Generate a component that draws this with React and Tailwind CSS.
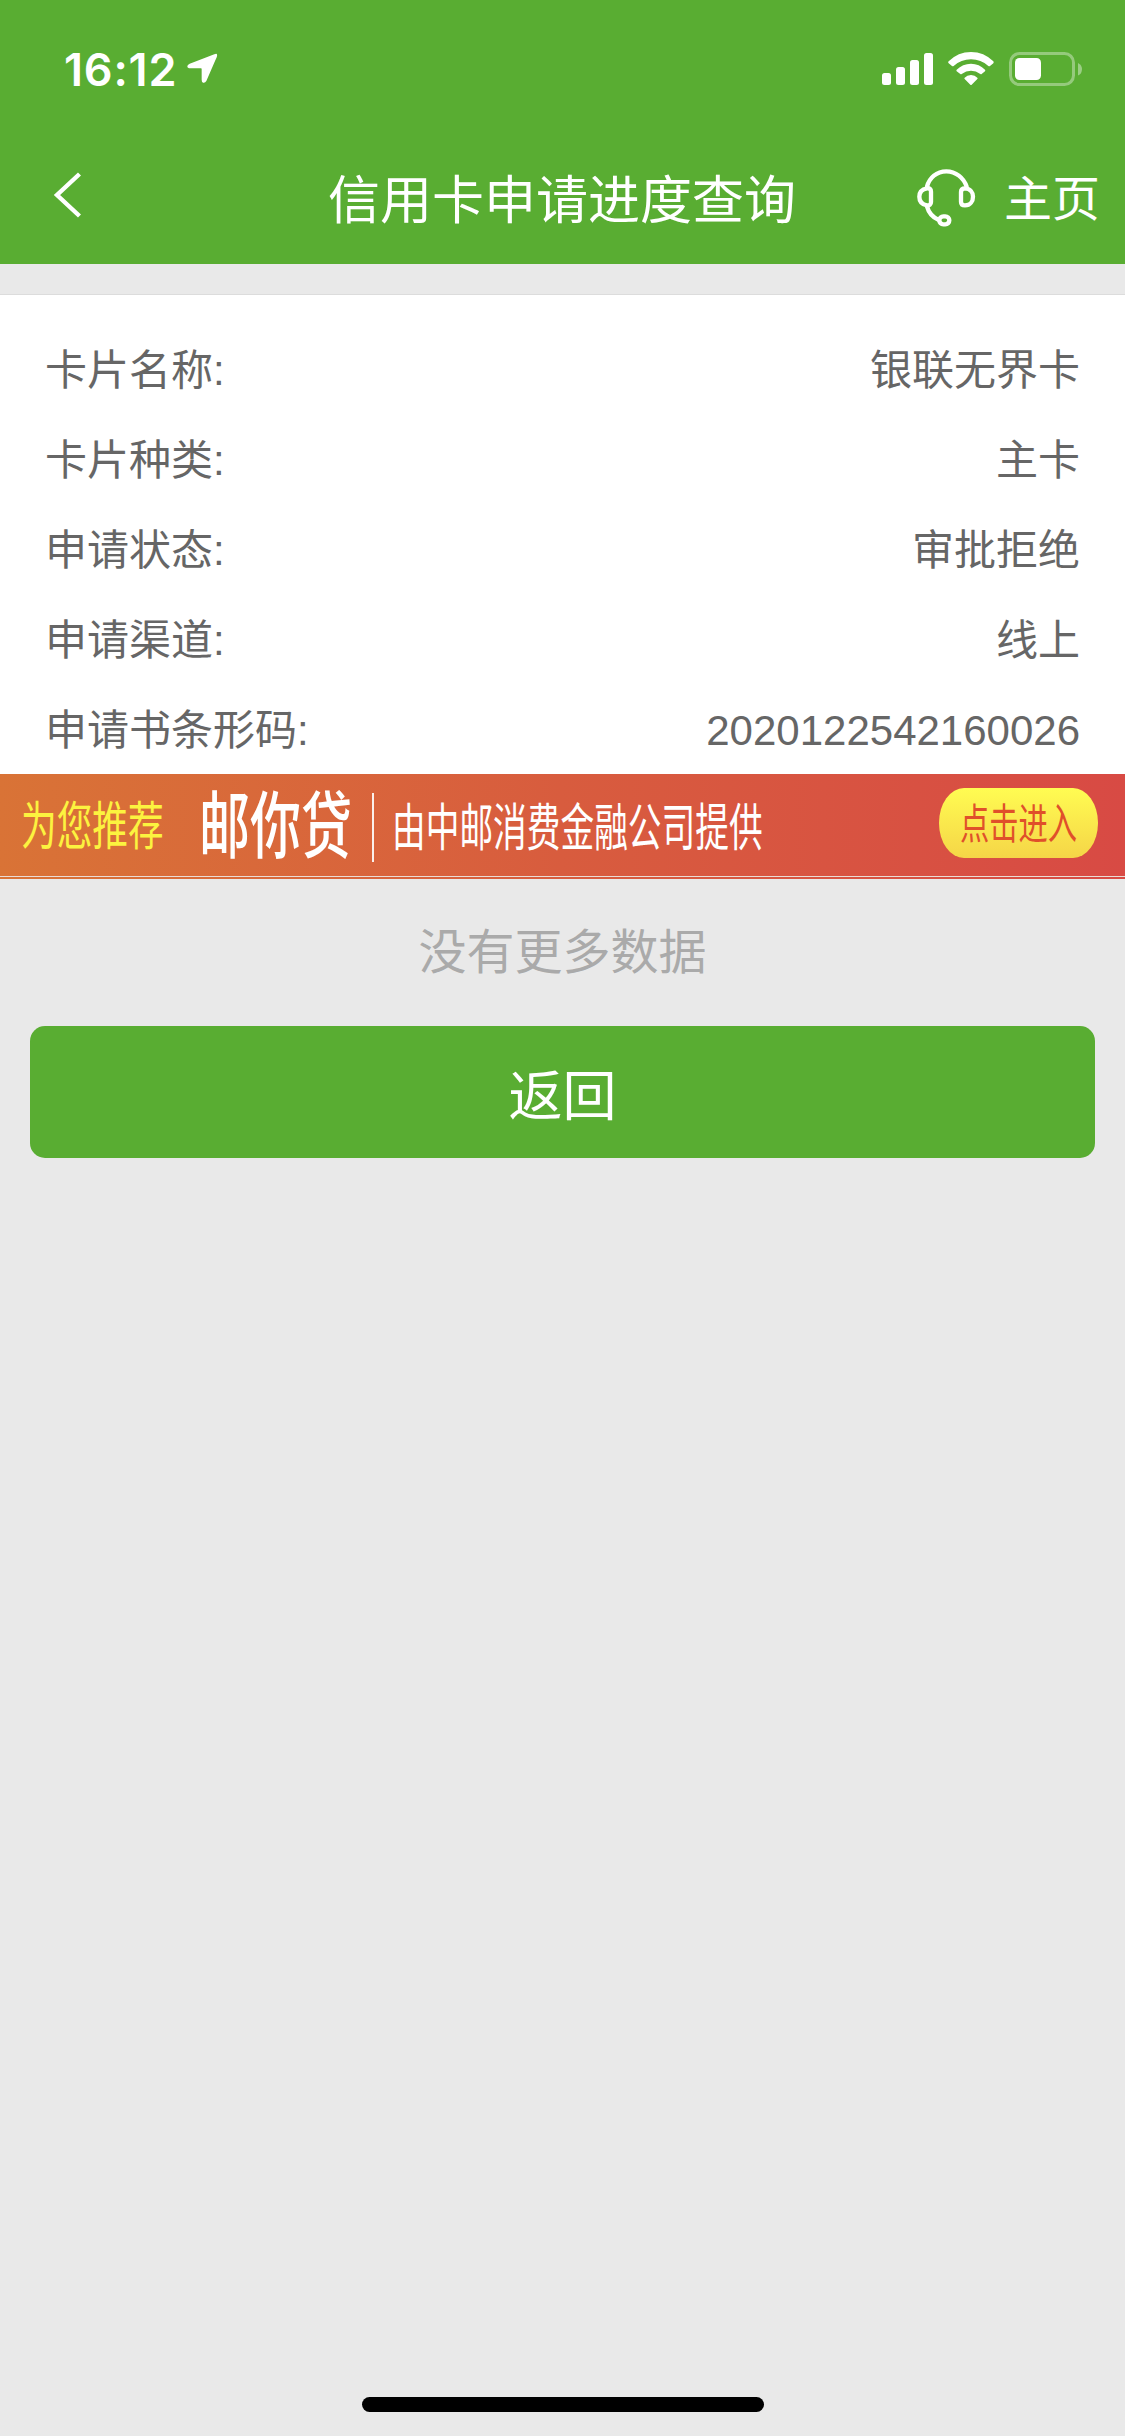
import React from "react";

const details = [
  { label: "卡片名称", value: "银联无界卡" },
  { label: "卡片种类", value: "主卡" },
  { label: "申请状态", value: "审批拒绝" },
  { label: "申请渠道", value: "线上" },
  { label: "申请书条形码", value: "2020122542160026" },
];

function StatusBar() {
  return (
    <div className="flex h-[132px] items-start justify-between pl-[64px] pr-[43px] pt-[51px]">
      <div className="flex items-start">
        <span className="w-[123px] font-['Inter'] text-[45px] font-semibold leading-[37px] tracking-[0.8px]">
          16:12
        </span>
        <svg className="mt-[2px] h-[32px] w-[32px]" viewBox="0 0 96 96" fill="currentColor">
          <path d="M82 4 Q92 -1 90 10 Q89 14 85 22 L58 84 Q54 91 48 89 Q44 87 44 80 V48 Q44 46 42 46 H10 Q1 46 1 40 Q1 35 8 32 Z" />
        </svg>
      </div>
      <div className="flex items-start gap-[15px]">
        <svg className="h-[36px] w-[51px]" viewBox="0 0 51 36" fill="currentColor">
          <rect x="0" y="22" width="9" height="12" rx="2.5" />
          <rect x="14" y="16" width="9" height="18" rx="2.5" />
          <rect x="28" y="9" width="9" height="25" rx="2.5" />
          <rect x="42" y="2" width="9" height="32" rx="2.5" />
        </svg>
        <svg className="h-[36px] w-[46px]" viewBox="0 0 138 108" fill="currentColor">
          <path d="M2 37 Q-1 34 2 31 Q30 3 69 3 Q108 3 136 31 Q138 34 136 37 L126 45 Q124 47 121 45 Q99 25 69 25 Q39 25 17 45 Q14 47 12 45 Z" />
          <path d="M26 61 Q24 58 26 56 Q44 38 69 38 Q94 38 111 56 Q113 58 111 61 L101 69 Q99 71 97 69 Q84 59 69 59 Q54 59 41 69 Q39 71 37 69 Z" />
          <path d="M50 84 Q48 82 50 80 Q57 72 69 72 Q81 72 88 80 Q90 82 88 84 L71 101 Q69 103 67 101 Z" />
        </svg>
        <svg className="h-[36px] w-[73px]" viewBox="0 0 73 36" fill="none">
          <rect x="1.5" y="2.5" width="63" height="31" rx="9" stroke="currentColor" strokeOpacity="0.36" strokeWidth="3" />
          <rect x="6" y="7" width="26" height="22" rx="4.5" fill="currentColor" />
          <path d="M69 12 Q73 14 73 18 Q73 23 69 24.500 Z" fill="currentColor" fillOpacity="0.4" />
        </svg>
      </div>
    </div>
  );
}

function Headset() {
  return (
    <svg
      className="h-[64px] w-[64px]"
      viewBox="0 0 192 192"
      fill="none"
      stroke="currentColor"
      strokeWidth="13"
      strokeLinecap="round"
    >
      <path d="M36 62 C43 35 65 16 94 16 C122 16 146 35 155 62" />
      <path d="M36 67 C20 70 13 80 13 92 C13 104 20 115 36 118 C44 119 48 115 48 108 V77 C48 70 44 66 36 67 Z" />
      <path d="M150 67 C166 68 174 80 174 92 C174 105 166 118 150 118 C142 118 138 114 138 107 V78 C138 71 142 67 150 67 Z" />
      <path d="M36 121 C41 140 54 154 70 161" />
      <rect x="73" y="151" width="30" height="24" rx="12" />
    </svg>
  );
}

function Header() {
  return (
    <header className="h-[264px] bg-[#59ad32] text-white">
      <StatusBar />
      <div className="grid h-[132px] grid-cols-[1fr_auto_1fr] items-center pl-[53px] pr-[25px]">
        <button className="mb-[7px] justify-self-start">
          <svg className="h-[48px] w-[30px]" viewBox="0 0 30 48" fill="none" stroke="currentColor" strokeWidth="4.4">
            <path d="M26.500 3 L4 24 L26.500 45" />
          </svg>
        </button>
        <h1 className="-ml-[29px] pt-[5px] text-[52px] leading-[60px]">信用卡申请进度查询</h1>
        <div className="flex items-center gap-[25px] justify-self-end">
          <Headset />
          <span className="pt-[4px] text-[48px] leading-[56px]">主页</span>
        </div>
      </div>
    </header>
  );
}

// The promo lettering is tall and narrow, so it is stretched vertically.
function Banner() {
  return (
    <div className="bg-linear-to-r from-[#d97336] via-[#d85c3e] to-[#d84a44] pb-[2px]">
      <div className="flex h-[102px] items-center whitespace-nowrap pl-[21px] pr-[27px]">
        <span className="w-[178px] pt-[3px] scale-y-[1.46] text-[35.7px] leading-[40px] text-[#fcf33f]">为您推荐</span>
        <span className="w-[173px] pt-[4px] scale-y-[1.42] text-[51px] font-medium leading-[56px] text-white">邮你贷</span>
        <span className="mt-[4px] h-[69px] w-[2px] bg-white/90" />
        <span className="ml-[18px] pt-[3px] scale-y-[1.52] text-[33.7px] leading-[40px] text-white">由中邮消费金融公司提供</span>
        <button className="ml-auto mb-[5px] flex h-[70px] w-[159px] items-center justify-center rounded-[25px/35px] bg-linear-to-b from-[#fffc52] to-[#f5d547]">
          <span className="pt-[2px] scale-y-[1.45] text-[29.3px] leading-[36px] text-[#e0502a]">点击进入</span>
        </button>
      </div>
      <div className="h-px bg-[#eadcd6]" />
    </div>
  );
}

export default function App() {
  return (
    <div className="flex h-[2436px] w-[1125px] flex-col bg-[#e9e9e9] font-['Liberation_Sans','Noto_Sans_CJK_SC',sans-serif]">
      <Header />

      <section className="mt-[30px] h-[480px] border-t border-[#dcdcdc] bg-white px-[45px] pt-[30px] text-[42px] text-[#666]">
        {details.map((row) => (
          <div key={row.label} className="flex h-[90px] items-center justify-between">
            <span>{row.label}:</span>
            <span>{row.value}</span>
          </div>
        ))}
      </section>

      <Banner />

      <p className="mt-[44px] text-center text-[48px] leading-[60px] text-[#aaa]">没有更多数据</p>

      <button className="mx-[30px] mt-[43px] h-[132px] rounded-[15px] bg-[#59ad32] pt-[10px] text-[54px] leading-[60px] text-white">
        返回
      </button>

      <div className="mx-auto mb-[24px] mt-auto h-[15px] w-[402px] rounded-full bg-black" />
    </div>
  );
}
